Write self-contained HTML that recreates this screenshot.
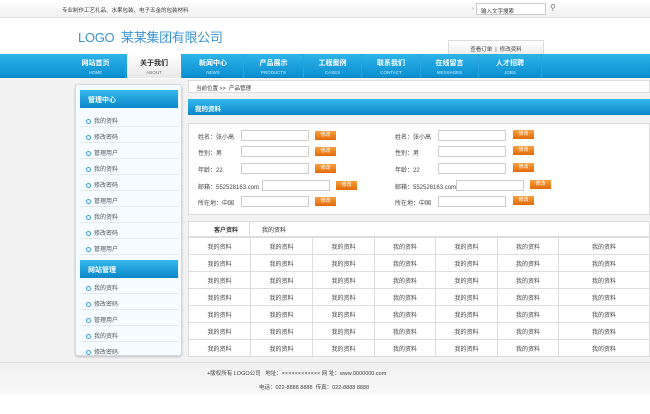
<!DOCTYPE html>
<html><head><meta charset="utf-8"><style>
*{margin:0;padding:0;box-sizing:border-box}
body{width:650px;height:414px;background:#fff;font-family:"Liberation Sans","Noto Sans CJK SC",sans-serif;font-size:6px;color:#333;position:relative;overflow:hidden}
.a{position:absolute}
.top{left:0;top:0;width:650px;height:18px;background:linear-gradient(#fff,#f1f1f1);border-bottom:1px solid #e2e2e2}
.nav{left:0;top:54px;width:650px;height:24px;background:linear-gradient(#2fb3ea,#0a8fd0);border-bottom:1px solid #0a7cb8}
.ni{top:0;height:24px;text-align:center;color:#fff;font-weight:bold;font-size:7px;padding-top:4px;border-right:1px solid #2aa4dd}
.ni small{display:block;font-size:4.5px;font-weight:normal;color:#cdeeff;margin-top:2px}
.ni.on{background:linear-gradient(#fff,#e8e8e8);color:#333}
.ni.on small{color:#777}
.main{left:0;top:79px;width:650px;height:283px;background:#f2f2f2}
.side{left:75px;top:84px;width:107px;height:272px;background:#f5fbfe;border:1px solid #d6dadc;border-radius:3px;box-shadow:0 1px 2px #bbb}
.sh{left:4px;width:98px;height:18px;background:linear-gradient(#35b8ee,#0b86c8);color:#fff;font-weight:bold;font-size:7px;padding:5px 0 0 8px}
.si{left:4px;width:98px;height:16px;border-bottom:1px solid #e5eaec;font-size:6px;color:#555;padding:5px 0 0 6px}
.si:before{content:"";display:inline-block;width:3px;height:3px;border:1px solid #3a9fd0;border-radius:50%;margin-right:3px;vertical-align:middle}
.lbl{font-size:6px;color:#444}
.inp{width:68px;height:11px;background:#fff;border:1px solid #ccc}
.btn{width:21px;height:9px;background:linear-gradient(#f8a040,#e26a08);color:#fff;font-size:5px;text-align:center;line-height:9px}
table{border-collapse:collapse}
td{border:1px solid #ddd;height:17px;text-align:center;font-size:6px;color:#444;background:#fff}
</style></head><body>
<div class="a top"></div>
<div class="a" style="left:62px;top:6px;font-size:5.5px;color:#444">专业制作工艺礼品、水果包装、电子五金的包装材料</div>
<div class="a" style="left:472px;top:6px;font-size:5px;color:#777">›</div>
<div class="a" style="left:476px;top:3px;width:70px;height:12px;border:1px solid #ccc;background:#fff;font-size:5.5px;padding:3px 0 0 4px">输入文字搜索</div>
<div class="a" style="left:550px;top:3px;font-size:8px;color:#777">⚲</div>
<div class="a" style="left:78px;top:27px;font-size:13px;color:#3a94d2;letter-spacing:-0.3px">LOGO&nbsp; 某某集团有限公司</div>
<div class="a" style="left:448px;top:40px;width:96px;height:14px;background:linear-gradient(#fff,#eee);border:1px solid #ddd;border-bottom:none;font-size:5.5px;text-align:center;padding-top:4px;color:#444">查看订单 &nbsp;|&nbsp; 修改资料</div>
<div class="a nav">
<div class="a ni" style="left:66px;width:60px">网站首页<small>HOME</small></div>
<div class="a ni on" style="left:127px;width:55px">关于我们<small>ABOUT</small></div>
<div class="a ni" style="left:183px;width:61px">新闻中心<small>NEWS</small></div>
<div class="a ni" style="left:244px;width:60px">产品展示<small>PRODUCTS</small></div>
<div class="a ni" style="left:304px;width:58px">工程案例<small>CASES</small></div>
<div class="a ni" style="left:362px;width:59px">联系我们<small>CONTACT</small></div>
<div class="a ni" style="left:421px;width:58px">在线留言<small>MESSAGES</small></div>
<div class="a ni" style="left:479px;width:63px">人才招聘<small>JOBS</small></div>
</div>
<div class="a main"></div>
<div class="a side">
<div class="a sh" style="top:5px">管理中心</div>
<div class="a si" style="top:26px">我的资料</div>
<div class="a si" style="top:42px">修改密码</div>
<div class="a si" style="top:58px">管理用户</div>
<div class="a si" style="top:74px">我的资料</div>
<div class="a si" style="top:90px">修改密码</div>
<div class="a si" style="top:106px">管理用户</div>
<div class="a si" style="top:122px">我的资料</div>
<div class="a si" style="top:138px">修改密码</div>
<div class="a si" style="top:154px">管理用户</div>
<div class="a sh" style="top:175px">网站管理</div>
<div class="a si" style="top:193px">我的资料</div>
<div class="a si" style="top:209px">修改密码</div>
<div class="a si" style="top:225px">管理用户</div>
<div class="a si" style="top:241px">我的资料</div>
<div class="a si" style="top:257px;border:none">修改密码</div>
</div>
<div class="a" style="left:188px;top:80px;width:462px;height:13px;background:#fff;border:1px solid #ddd;font-size:5.5px;padding:3px 0 0 7px">当前位置 &gt;&gt; &nbsp;产品管理</div>
<div class="a" style="left:188px;top:99px;width:462px;height:16px;background:linear-gradient(#35b8ee,#0b86c8);color:#fff;font-weight:bold;font-size:6.5px;padding:4px 0 0 7px">我的资料</div>
<div class="a" style="left:188px;top:123px;width:462px;height:92px;background:#fff;border:1px solid #ddd"></div>
<div class="a lbl" style="left:198px;top:132px">姓名：张小高</div><div class="a inp" style="left:241px;top:130px"></div><div class="a btn" style="left:315px;top:131px">修改</div>
<div class="a lbl" style="left:198px;top:148px">性别：男</div><div class="a inp" style="left:241px;top:146px"></div><div class="a btn" style="left:315px;top:147px">修改</div>
<div class="a lbl" style="left:198px;top:165px">年龄：22</div><div class="a inp" style="left:241px;top:163px"></div><div class="a btn" style="left:315px;top:164px">修改</div>
<div class="a lbl" style="left:198px;top:182px">邮箱：552528163.com</div><div class="a inp" style="left:262px;top:180px"></div><div class="a btn" style="left:336px;top:181px">修改</div>
<div class="a lbl" style="left:198px;top:198px">所在地：中国</div><div class="a inp" style="left:241px;top:196px"></div><div class="a btn" style="left:315px;top:197px">修改</div>
<div class="a lbl" style="left:395px;top:132px">姓名：张小高</div><div class="a inp" style="left:438px;top:130px"></div><div class="a btn" style="left:513px;top:130px">修改</div>
<div class="a lbl" style="left:395px;top:148px">性别：男</div><div class="a inp" style="left:438px;top:146px"></div><div class="a btn" style="left:513px;top:146px">修改</div>
<div class="a lbl" style="left:395px;top:165px">年龄：22</div><div class="a inp" style="left:438px;top:163px"></div><div class="a btn" style="left:513px;top:163px">修改</div>
<div class="a lbl" style="left:395px;top:182px">邮箱：552528163.com</div><div class="a inp" style="left:456px;top:180px"></div><div class="a btn" style="left:530px;top:180px">修改</div>
<div class="a lbl" style="left:395px;top:198px">所在地：中国</div><div class="a inp" style="left:438px;top:196px"></div><div class="a btn" style="left:513px;top:196px">修改</div>
<div class="a" style="left:188px;top:221px;width:462px;height:16px;background:#fff;border:1px solid #ddd"></div>
<div class="a" style="left:203px;top:221px;width:47px;height:16px;border-right:1px solid #ddd;font-size:6px;font-weight:bold;text-align:center;padding-top:4px">客户资料</div>
<div class="a" style="left:262px;top:225px;font-size:6px">我的资料</div>
<table class="a" style="left:188px;top:237px;width:462px">
<colgroup><col style="width:62px"><col style="width:62px"><col style="width:62px"><col style="width:61px"><col style="width:62px"><col style="width:61px"><col></colgroup>
<tr><td>我的资料</td><td>我的资料</td><td>我的资料</td><td>我的资料</td><td>我的资料</td><td>我的资料</td><td>我的资料</td></tr>
<tr><td>我的资料</td><td>我的资料</td><td>我的资料</td><td>我的资料</td><td>我的资料</td><td>我的资料</td><td>我的资料</td></tr>
<tr><td>我的资料</td><td>我的资料</td><td>我的资料</td><td>我的资料</td><td>我的资料</td><td>我的资料</td><td>我的资料</td></tr>
<tr><td>我的资料</td><td>我的资料</td><td>我的资料</td><td>我的资料</td><td>我的资料</td><td>我的资料</td><td>我的资料</td></tr>
<tr><td>我的资料</td><td>我的资料</td><td>我的资料</td><td>我的资料</td><td>我的资料</td><td>我的资料</td><td>我的资料</td></tr>
<tr><td>我的资料</td><td>我的资料</td><td>我的资料</td><td>我的资料</td><td>我的资料</td><td>我的资料</td><td>我的资料</td></tr>
<tr><td>我的资料</td><td>我的资料</td><td>我的资料</td><td>我的资料</td><td>我的资料</td><td>我的资料</td><td>我的资料</td></tr>
</table>
<div class="a" style="left:0;top:362px;width:650px;height:32px;background:linear-gradient(#f0f0f0,#f8f8f8);border-top:1px solid #e2e2e2"></div>
<div class="a" style="left:207px;top:369px;font-size:5.5px;color:#444;white-space:nowrap">+版权所有 LOGO公司 &nbsp; 地址：×××××××××××× 网 址：www.0000000.com</div>
<div class="a" style="left:259px;top:383px;font-size:5.5px;color:#444;white-space:nowrap">电话：022-8888 8888 &nbsp;传真：022-8888 8888</div>
</body></html>
